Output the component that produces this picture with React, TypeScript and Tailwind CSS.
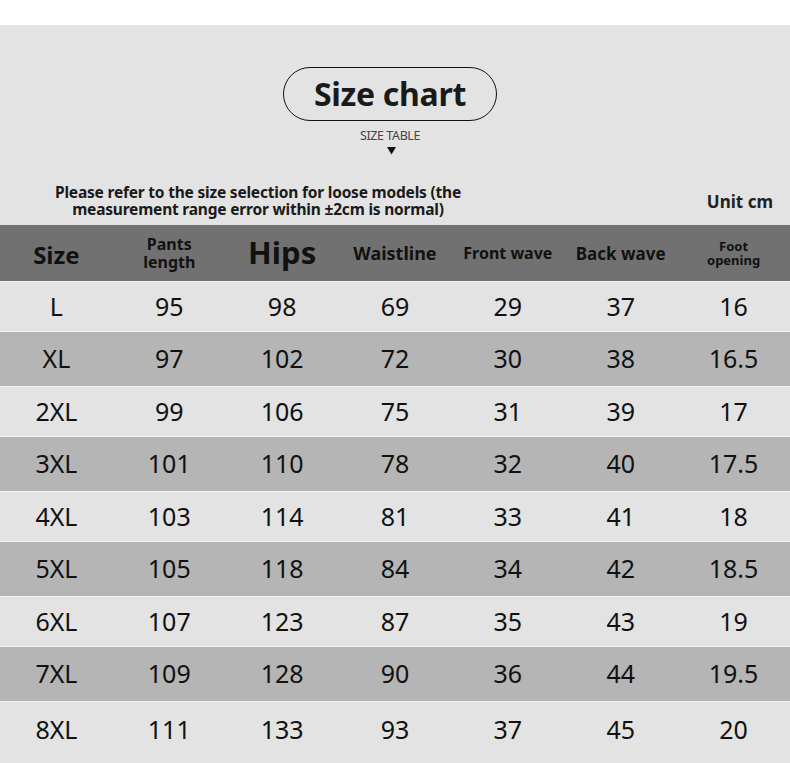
const headers = [
  { label: 'Size', cls: 'text-[24px] mt-[4px]' },
  { label: 'Pants\nlength', cls: 'text-[16px] leading-[18px]' },
  { label: 'Hips', cls: 'text-[31px]' },
  { label: 'Waistline', cls: 'text-[18px] mt-[2px]' },
  { label: 'Front wave', cls: 'text-[16px]' },
  { label: 'Back wave', cls: 'text-[17px] mt-[3px]' },
  { label: 'Foot\nopening', cls: 'text-[13px] leading-[14px]' },
]

const rows = [
  ['L', '95', '98', '69', '29', '37', '16'],
  ['XL', '97', '102', '72', '30', '38', '16.5'],
  ['2XL', '99', '106', '75', '31', '39', '17'],
  ['3XL', '101', '110', '78', '32', '40', '17.5'],
  ['4XL', '103', '114', '81', '33', '41', '18'],
  ['5XL', '105', '118', '84', '34', '42', '18.5'],
  ['6XL', '107', '123', '87', '35', '43', '19'],
  ['7XL', '109', '128', '90', '36', '44', '19.5'],
  ['8XL', '111', '133', '93', '37', '45', '20'],
]

const font = { fontFamily: '"Noto Sans", "Open Sans", sans-serif' }

export default function App() {
  return (
    <div className="w-[790px] h-[763px] overflow-hidden bg-white" style={font}>
      <div className="h-[25px] bg-white" />
      <div className="bg-[#e3e3e3] h-[738px] flex flex-col">
        {/* title */}
        <div className="flex flex-col items-center pt-[42px] pr-[10px]">
          <div className="w-[214px] h-[54px] rounded-full border-[1.5px] border-[#111] flex items-center justify-center">
            <span className="text-[32px] font-bold text-[#1a1a1a] tracking-[-0.3px] leading-none">Size chart</span>
          </div>
          <div className="mt-[9px] text-[12.5px] text-[#444] tracking-[-0.4px] leading-none">SIZE TABLE</div>
          <svg width="9" height="8" viewBox="0 0 9 8" className="mt-[4px] ml-[3px]">
            <polygon points="0,0 9,0 4.5,7.5" fill="#111" />
          </svg>
        </div>

        {/* note */}
        <div className="flex items-end mt-[28px] h-[42px]">
          <div className="w-[516px] text-center text-[15.5px] font-bold leading-[17px] text-[#1a1a1a] tracking-[-0.2px] pb-[7px]">
            Please refer to the size selection for loose models (the
            <br />
            measurement range error within ±2cm is normal)
          </div>
          <div className="flex-1 text-right pr-[17px] text-[17px] font-bold text-[#222] pb-[10px]">Unit cm</div>
        </div>

        {/* header */}
        <div className="grid grid-cols-7 h-[56px] bg-[#717171]">
          {headers.map((h) => (
            <div key={h.label} className="flex items-center justify-center text-center">
              <span className={`font-bold text-[#111] whitespace-pre-line ${h.cls}`}>{h.label}</span>
            </div>
          ))}
        </div>

        {/* body */}
        {rows.map((r, i) => {
          const dark = i % 2 === 1
          const last = i === rows.length - 1
          return (
            <div
              key={r[0]}
              className={`grid grid-cols-7 border-t border-[#f1f1f1] ${
                dark ? 'bg-[#b5b5b5] h-[55px]' : 'bg-[#e3e3e3] h-[50px]'
              } ${last ? 'flex-1 pb-[6px]' : ''}`}
            >
              {r.map((c, j) => (
                <div key={j} className="flex items-center justify-center text-[25px] text-[#111] leading-none">
                  {c}
                </div>
              ))}
            </div>
          )
        })}
      </div>
    </div>
  )
}
